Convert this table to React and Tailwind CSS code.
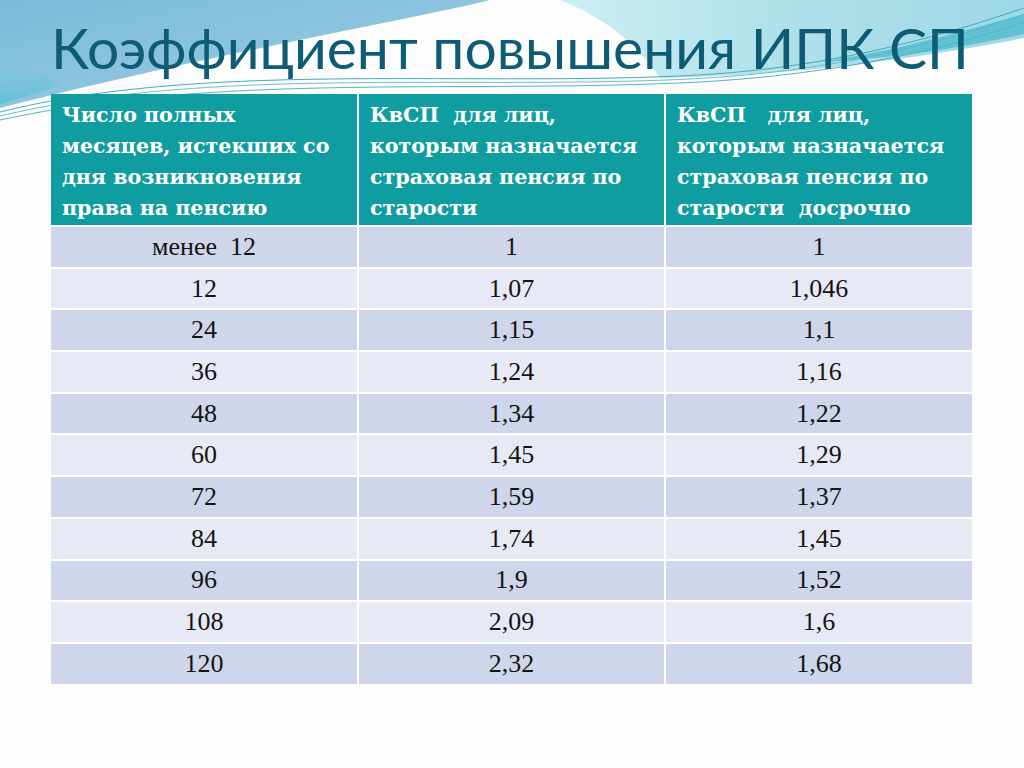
import React from 'react'

const rows = [
  ['менее  12', '1', '1'],
  ['12', '1,07', '1,046'],
  ['24', '1,15', '1,1'],
  ['36', '1,24', '1,16'],
  ['48', '1,34', '1,22'],
  ['60', '1,45', '1,29'],
  ['72', '1,59', '1,37'],
  ['84', '1,74', '1,45'],
  ['96', '1,9', '1,52'],
  ['108', '2,09', '1,6'],
  ['120', '2,32', '1,68'],
]

const headers = [
  ['Число полных', 'месяцев, истекших со', 'дня возникновения', 'права на пенсию'],
  ['КвСП\u00a0 для лиц,', 'которым назначается', 'страховая пенсия по', 'старости'],
  ['КвСП\u00a0\u00a0 для лиц,', 'которым назначается', 'страховая пенсия по', 'старости\u00a0 досрочно'],
]

function Waves() {
  return (
    <svg className="absolute left-0 top-0" width="1024" height="140" viewBox="0 0 1024 140">
      <defs>
        <linearGradient id="blueL" x1="0" y1="0" x2="1" y2="1">
          <stop offset="0" stopColor="#7cbad8" />
          <stop offset="0.6" stopColor="#8fc6df" />
          <stop offset="1" stopColor="#a9d6e6" />
        </linearGradient>
        <linearGradient id="cyanR" x1="0" y1="0" x2="1" y2="0">
          <stop offset="0" stopColor="#cbeef3" />
          <stop offset="0.5" stopColor="#afe0ea" />
          <stop offset="1" stopColor="#9ed8e6" />
        </linearGradient>
        <linearGradient id="edge" x1="0" y1="0" x2="0" y2="1">
          <stop offset="0" stopColor="#8ac6dd" stopOpacity="0" />
          <stop offset="1" stopColor="#45c1d4" />
        </linearGradient>
      </defs>
      <path d="M0,0 L490,0 C400,22 220,52 0,108 Z" fill="url(#blueL)" />
      <path d="M0,55 C20,60 40,75 60,85 C40,92 20,98 0,104 Z" fill="url(#edge)" opacity="0.7" />
      <path d="M560,0 L1024,0 L1024,38 C900,62 780,76 660,78 C640,48 610,20 560,0 Z" fill="url(#cyanR)" />
      <path d="M0,112 C200,62 450,86 680,76 C820,70 930,40 1024,8" fill="none" stroke="#47a9bd" strokeWidth="1" />
      <path d="M0,116 C210,66 460,90 690,79 C830,72 940,44 1024,14" fill="none" stroke="#6fc0cf" strokeWidth="1" />
      <path d="M0,120 C220,72 470,94 700,82 C840,74 950,48 1024,22" fill="none" stroke="#2f9fb2" strokeWidth="0.8" />
      <path d="M820,62 C900,50 960,32 1024,14 L1024,34 C960,48 900,58 820,62 Z" fill="#4cb8cc" opacity="0.75" />
    </svg>
  )
}

export default function App() {
  return (
    <div className="relative w-[1024px] h-[768px] overflow-hidden bg-[#fdfdfd]">
      <Waves />
      <div className="relative pl-[51px] pt-[12px]">
        <h1 className="text-[57px] leading-[70px] text-[#0d5b74]" style={{ fontFamily: 'Lato, "Open Sans", sans-serif' }}>
          Коэффициент повышения ИПК СП
        </h1>
        <table className="mt-[12px] w-[921px] border-collapse table-fixed" style={{ fontFamily: '"Liberation Serif", "Times New Roman", serif' }}>
          <thead>
            <tr className="bg-[#109da1] text-white align-top">
              {headers.map((h, j) => (
                <th
                  key={j}
                  className={'w-[307px] h-[132px] border-b-2 border-white text-left pl-[11px] pr-[4px] pt-[6px] pb-[1px] font-bold text-[20.6px] leading-[31px] whitespace-nowrap ' + (j < 2 ? 'border-r-2' : '')}
                  style={{ fontFamily: '"DejaVu Serif", serif' }}
                >
                  {h.map((line, k) => (
                    <div key={k}>{line}</div>
                  ))}
                </th>
              ))}
            </tr>
          </thead>
          <tbody>
            {rows.map((r, i) => (
              <tr key={i} className={i % 2 === 0 ? 'bg-[#cfd5ea]' : 'bg-[#e7eaf4]'}>
                {r.map((c, j) => (
                  <td key={j} className={'h-[41.7px] text-center text-[26px] leading-none text-[#141414] border-white border-b-2 whitespace-pre ' + (j < 2 ? 'border-r-2' : '')}>
                    {c}
                  </td>
                ))}
              </tr>
            ))}
          </tbody>
        </table>
      </div>
    </div>
  )
}
